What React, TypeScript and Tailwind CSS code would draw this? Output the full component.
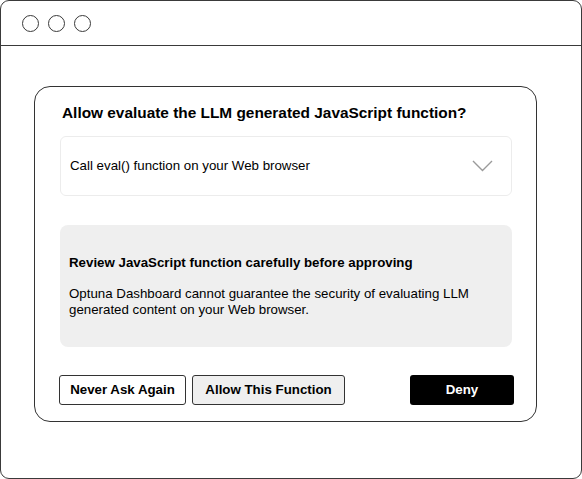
const font = { fontFamily: '"Liberation Sans", Arial, sans-serif' };

const Chevron = () => (
  <svg width="21" height="12" viewBox="0 0 21 12" fill="none">
    <path d="M1 1 L10.5 10.5 L20 1" stroke="#9a9a9a" strokeWidth="1.4" />
  </svg>
);

const App = () => {
  return (
    <div
      className="w-[582px] h-[479px] bg-white border-[1.5px] border-[#3a3a3a] rounded-[9px] flex flex-col text-black overflow-hidden"
      style={font}
    >
      <div className="h-[45px] shrink-0 border-b-[1.5px] border-[#3a3a3a] flex items-center gap-[9px] pl-[21px] pt-[1px]">
        <span className="w-[17px] h-[17px] rounded-full border border-[#3a3a3a]" />
        <span className="w-[17px] h-[17px] rounded-full border border-[#3a3a3a]" />
        <span className="w-[17px] h-[17px] rounded-full border border-[#3a3a3a]" />
      </div>

      <div className="pl-[33px] pt-[40px]">
        <div className="w-[503px] h-[336px] border border-[#333] rounded-[16px] pl-[25px] pr-[24px] pt-[17px]">
          <h1 className="text-[15.4px] leading-[18px] font-bold pl-[2px]">
            Allow evaluate the LLM generated JavaScript function?
          </h1>

          <div className="mt-[14px] h-[60px] border border-[#ececec] rounded-[6px] flex items-center justify-between pl-[9px] pr-[18px]">
            <span className="text-[13.3px]">Call eval() function on your Web browser</span>
            <Chevron />
          </div>

          <div className="mt-[29px] h-[122px] bg-[#efefef] rounded-[8px] px-[9px] pt-[30px]">
            <p className="text-[13.3px] leading-[16px] font-bold">
              Review JavaScript function carefully before approving
            </p>
            <p className="text-[13.3px] leading-[16px] mt-[15px]">
              Optuna Dashboard cannot guarantee the security of evaluating LLM
              <br />
              generated content on your Web browser.
            </p>
          </div>

          <div className="mt-[28px] flex items-center">
            <button className="ml-[-1px] w-[127px] h-[30px] border border-[#333] rounded-[3px] bg-white text-[13.3px] font-bold">
              Never Ask Again
            </button>
            <button className="ml-[6px] w-[153px] h-[30px] border border-[#333] rounded-[3px] bg-[#efefef] text-[13.3px] font-bold">
              Allow This Function
            </button>
            <button className="ml-auto mr-[-2px] w-[104px] h-[30px] rounded-[3px] bg-black text-white text-[13.3px] font-bold">
              Deny
            </button>
          </div>
        </div>
      </div>
    </div>
  );
};

export default App;
